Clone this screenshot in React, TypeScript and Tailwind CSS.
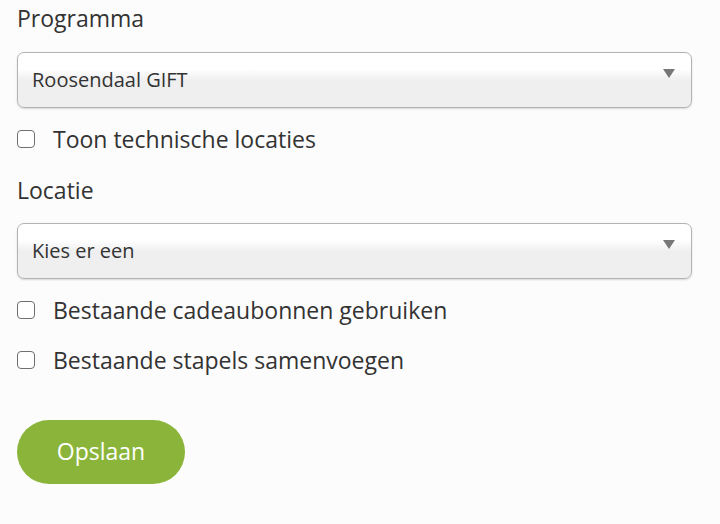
export default function App() {
  const checkbox = (label: string) => (
    <label className="flex items-center gap-[18px] h-[30px]">
      <span className="w-[18px] h-[18px] rounded-[4px] border-[1.5px] border-[#6f6f6f] bg-white shrink-0" />
      <span className="text-[23px] leading-[30px] text-[#333]">{label}</span>
    </label>
  );

  const select = (value: string) => (
    <div className="relative h-[56px] rounded-[7px] border border-[#b3b3b3] bg-gradient-to-b from-white from-30% to-[#efefef] to-50% shadow-[0_1px_2px_rgba(0,0,0,0.15)] flex items-center px-[14px]">
      <span className="text-[20px] text-[#333]">{value}</span>
      <span className="absolute right-[16px] top-[16px] w-0 h-0 border-l-[6px] border-r-[6px] border-t-[9px] border-l-transparent border-r-transparent border-t-[#777]" />
    </div>
  );

  return (
    <div className="min-h-[524px] bg-[#fcfcfc] font-['Open_Sans',sans-serif] pl-[17px] pr-[28px] pt-[2px]">
      <div className="text-[23px] leading-[32px] text-[#333] h-[35px]">Programma</div>
      <div className="mt-[15px]">{select('Roosendaal GIFT')}</div>
      <div className="mt-[16px]">{checkbox('Toon technische locaties')}</div>
      <div className="text-[23px] leading-[32px] text-[#333] mt-[20px] h-[34px]">Locatie</div>
      <div className="mt-[15px]">{select('Kies er een')}</div>
      <div className="mt-[16px] flex flex-col gap-[20px]">
        {checkbox('Bestaande cadeaubonnen gebruiken')}
        {checkbox('Bestaande stapels samenvoegen')}
      </div>
      <button className="mt-[45px] w-[168px] h-[64px] rounded-full bg-[#8ab53a] text-white text-[23px] leading-[30px] pb-[3px]">
        Opslaan
      </button>
    </div>
  );
}
